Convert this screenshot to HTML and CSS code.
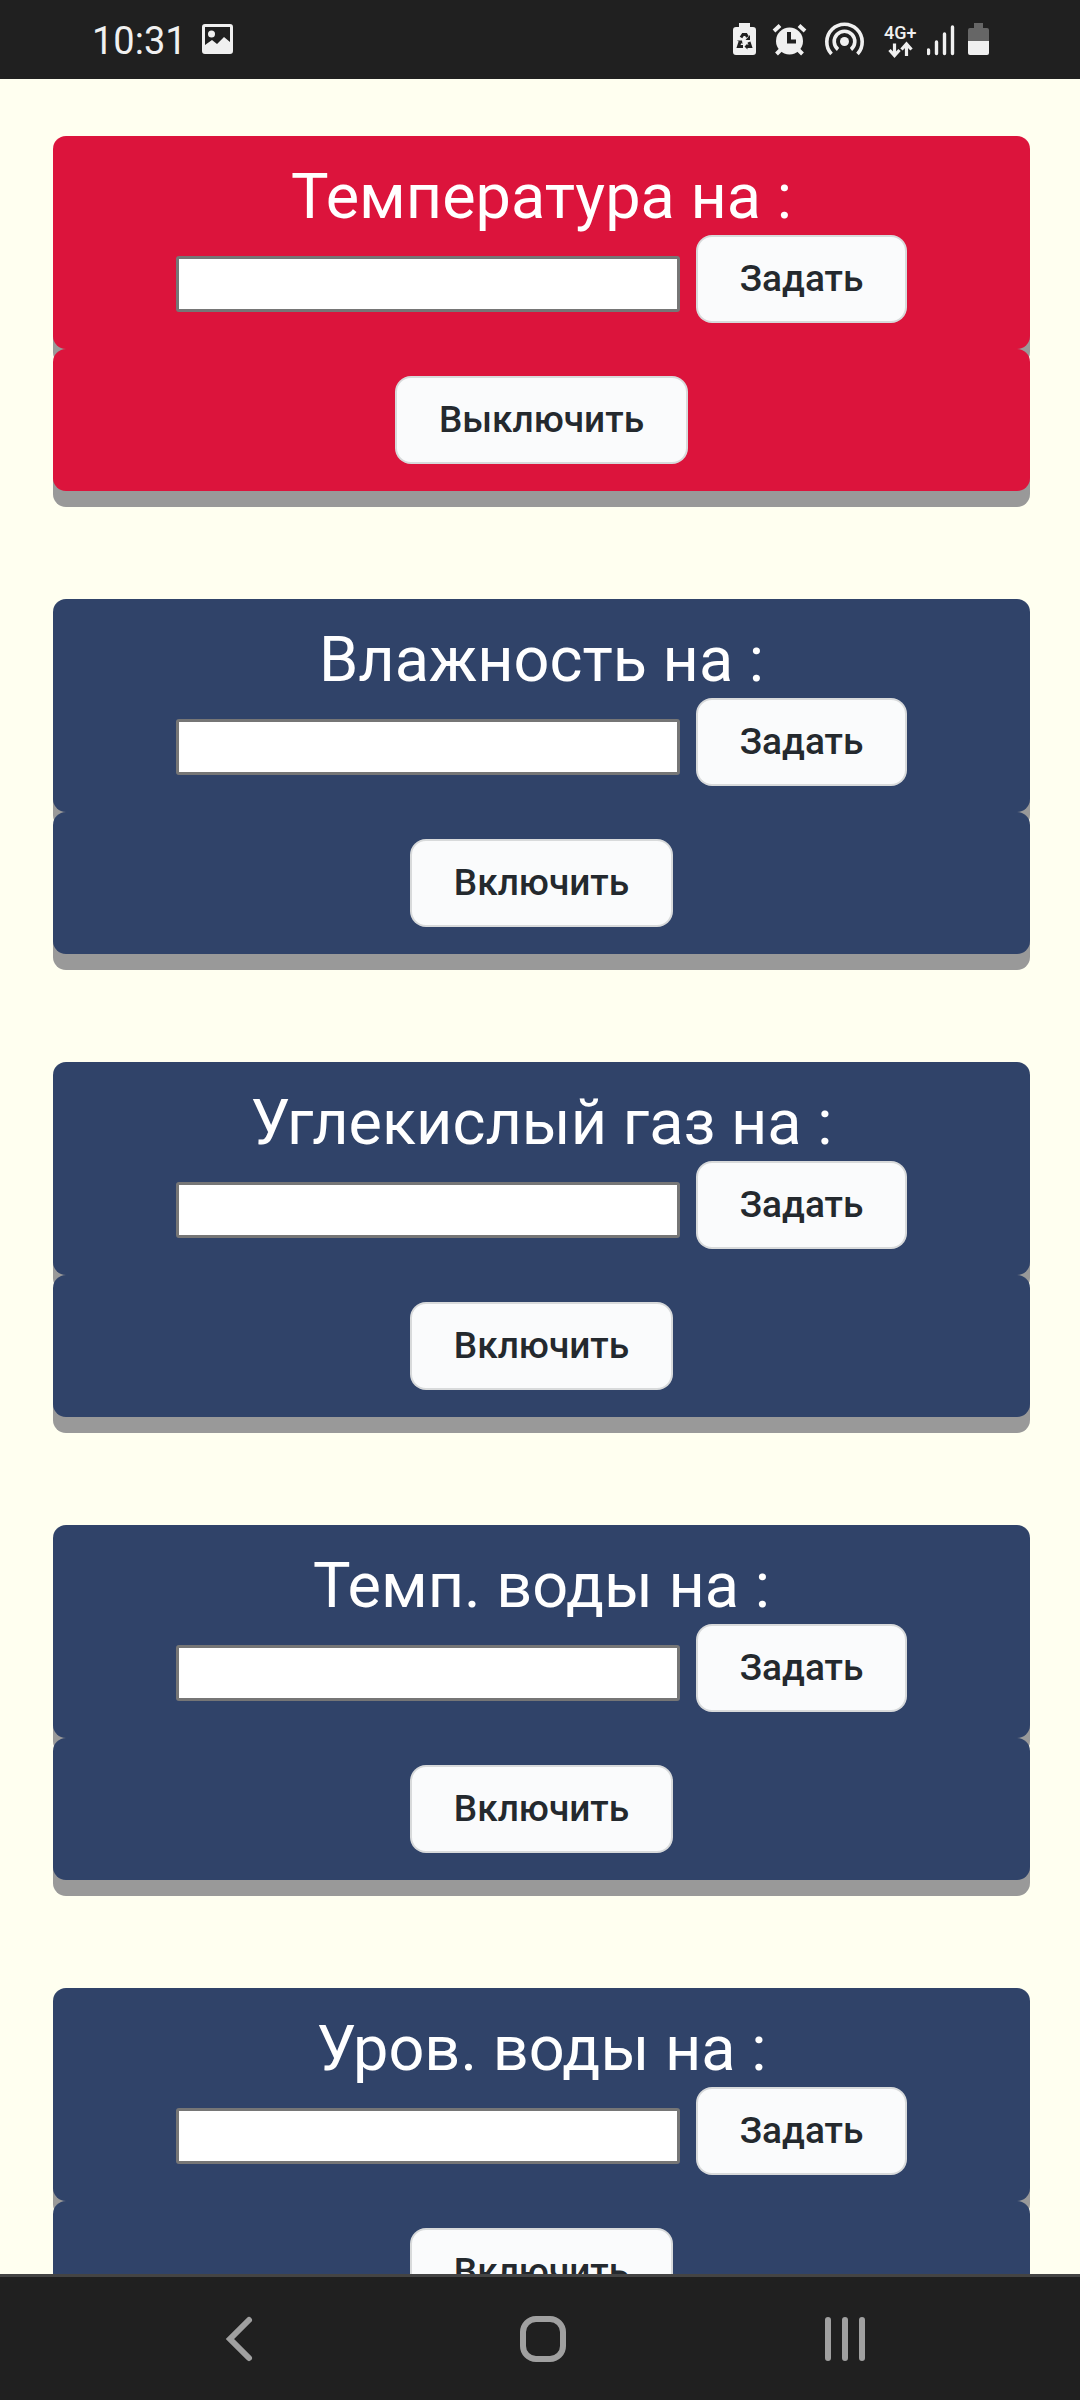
FILE: index.html
```
<!DOCTYPE html>
<html lang="ru">
<head>
<meta charset="utf-8">
<meta name="viewport" content="width=device-width, initial-scale=1">
<title>Управление климатом</title>
<link rel="stylesheet" href="styles.css">
</head>
<body>
<header class="status">
  <span class="clock">10:31</span>
  <svg class="glyph" width="32" height="40" viewBox="0 20 32 40" aria-hidden="true">
    <path fill="#f0f0f0" fill-rule="evenodd" d="M3 24H28Q31 24 31 27V51Q31 54 28 54H3Q0 54 0 51V27Q0 24 3 24ZM3 27V45L10 40L15 44L22 37L28 42V27Z"/>
    <circle cx="9.500" cy="34" r="3.500" fill="#f0f0f0"/>
  </svg>
  <div class="indicators">
    <svg class="glyph" width="26" height="40" viewBox="732 20 26 40" aria-hidden="true">
      <path fill="#f0f0f0" d="M739 23H750V27H753Q756 27 756 30V52Q756 55 753 55H736Q733 55 733 52V30Q733 27 736 27H739Z"/>
      <g fill="none" stroke="#202020" stroke-width="3">
        <path d="M741 37.500L743 34.500H746L747.500 37"/>
        <path d="M740 42L738.500 46.500H743"/>
        <path d="M747 46.500H750.500L749 42"/>
      </g>
      <path fill="#202020" d="M750 35V40H745.500ZM737 40.500H742L742.500 44ZM747.500 43.500V49.500L744.500 46.500Z"/>
    </svg>
    <svg class="glyph" width="44" height="40" viewBox="768 20 44 40" aria-hidden="true">
      <g stroke="#f0f0f0" stroke-width="4" fill="none">
        <path d="M774 31L780 25.500M799 25.500L805 31M776.500 54L782 48.500M797 48.500L802.500 54"/>
      </g>
      <circle cx="789.500" cy="41" r="13.500" fill="#f0f0f0"/>
      <path d="M789 32V41.500H796" stroke="#202020" stroke-width="4" fill="none"/>
    </svg>
    <svg class="glyph" width="46" height="40" viewBox="822 20 46 40" aria-hidden="true">
      <circle cx="844.500" cy="41.500" r="4.500" fill="#f0f0f0"/>
      <g stroke="#f0f0f0" stroke-width="3.600" fill="none">
        <path d="M838 49.500A10.300 10.300 0 1 1 851 49.500"/>
        <path d="M831.500 54A17.700 17.700 0 1 1 857.500 54"/>
      </g>
    </svg>
    <svg class="glyph network" width="39" height="40" viewBox="878 20 39 40" role="img" aria-label="4G+">
      <text x="884" y="39">4G+</text>
      <path d="M894.500 43.500V55M889.500 50L894.500 55.500L899.500 50M906.500 56V45M901.500 49.500L906.500 44L911.500 49.500" stroke="#f0f0f0" stroke-width="3.200" fill="none"/>
    </svg>
    <svg class="glyph" width="30" height="40" viewBox="927 20 30 40" aria-hidden="true">
      <path d="M928.500 50V53.500M936.500 42V53.500M944.500 34V53.500M952.500 27V53.500" stroke="#f0f0f0" stroke-width="3.400" stroke-linecap="round"/>
    </svg>
    <svg class="glyph" width="23" height="40" viewBox="967 20 23 40" aria-hidden="true">
      <path fill="#666" d="M974 23H983V28H987Q989 28 989 30V41H968V30Q968 28 970 28H974Z"/>
      <path fill="#f0f0f0" d="M968 41H989V53Q989 55 987 55H970Q968 55 968 53Z"/>
    </svg>
  </div>
</header>

<main class="content">
  <section class="card card-active">
    <form class="panel">
      <label class="title" for="temperature">Температура на :</label>
      <div class="row">
        <input class="field" id="temperature" type="text">
        <button class="btn" type="button">Задать</button>
      </div>
    </form>
    <div class="panel panel-toggle"><button class="btn" type="button">Выключить</button></div>
  </section>

  <section class="card">
    <form class="panel">
      <label class="title" for="humidity">Влажность на :</label>
      <div class="row">
        <input class="field" id="humidity" type="text">
        <button class="btn" type="button">Задать</button>
      </div>
    </form>
    <div class="panel panel-toggle"><button class="btn" type="button">Включить</button></div>
  </section>

  <section class="card">
    <form class="panel">
      <label class="title" for="co2">Углекислый газ на :</label>
      <div class="row">
        <input class="field" id="co2" type="text">
        <button class="btn" type="button">Задать</button>
      </div>
    </form>
    <div class="panel panel-toggle"><button class="btn" type="button">Включить</button></div>
  </section>

  <section class="card">
    <form class="panel">
      <label class="title" for="water-temperature">Темп. воды на :</label>
      <div class="row">
        <input class="field" id="water-temperature" type="text">
        <button class="btn" type="button">Задать</button>
      </div>
    </form>
    <div class="panel panel-toggle"><button class="btn" type="button">Включить</button></div>
  </section>

  <section class="card">
    <form class="panel">
      <label class="title" for="water-level">Уров. воды на :</label>
      <div class="row">
        <input class="field" id="water-level" type="text">
        <button class="btn" type="button">Задать</button>
      </div>
    </form>
    <div class="panel panel-toggle"><button class="btn" type="button">Включить</button></div>
  </section>
</main>

<nav class="navbar">
  <button class="nav-btn" type="button" aria-label="Назад">
    <svg width="48" height="48" viewBox="0 0 48 48"><path d="M33 5L14 24L33 43"/></svg>
  </button>
  <button class="nav-btn" type="button" aria-label="Домой">
    <svg width="48" height="48" viewBox="0 0 48 48"><rect x="4" y="4" width="40" height="40" rx="13"/></svg>
  </button>
  <button class="nav-btn" type="button" aria-label="Недавние">
    <svg width="48" height="48" viewBox="0 0 48 48"><path d="M7 5V43M24 5V43M41 5V43"/></svg>
  </button>
</nav>
</body>
</html>
```
FILE: styles.css
```
* {
  box-sizing: border-box;
}

body {
  margin: 0;
  height: 100vh;
  display: flex;
  flex-direction: column;
  background: #fffff0;
  font-family: Roboto, "Liberation Sans", sans-serif;
}

/* Status bar */
.status {
  flex: none;
  display: flex;
  align-items: center;
  height: 79px;
  padding: 0 90px 0 92px;
  background: #202020;
  color: #f0f0f0;
}

.clock {
  width: 110px;
  padding-top: 2px;
  font-size: 38px;
  line-height: 48px;
}

.indicators {
  display: flex;
  gap: 10px;
  margin-left: auto;
}

.glyph {
  display: block;
}

.network text {
  fill: #f0f0f0;
  font-size: 18px;
  font-weight: 500;
}

/* Cards */
.content {
  flex: 1;
  min-height: 0;
  overflow-y: auto;
  scrollbar-width: none;
  display: flex;
  flex-direction: column;
  gap: 108px;
  padding: 57px 50px 108px 53px;
}

.card {
  flex: none;
  color: #fff;
}

.panel {
  padding: 23px 24px 26px;
  border-radius: 13px;
  background: #304369;
  box-shadow: 0 16px 0 #999;
  text-align: center;
}

.card-active .panel {
  background: #dc143c;
}

.panel-toggle {
  position: relative;
  padding: 27px 24px;
}

.title {
  display: block;
  font-size: 63px;
  line-height: 76px;
}

.row {
  display: flex;
  justify-content: center;
  align-items: flex-end;
  gap: 16px;
}

.field {
  width: 504px;
  min-width: 0;
  height: 56px;
  margin-bottom: 11px;
  padding: 3px 6px;
  border: 3px solid #767676;
  border-radius: 3px;
  background: #fff;
  font: 35px "Liberation Sans", sans-serif;
}

.btn {
  height: 88px;
  padding: 0 42px;
  border: 2px solid rgba(27, 31, 35, 0.15);
  border-radius: 16px;
  background: #fafbfc;
  color: #24292e;
  font-family: inherit;
  font-size: 37px;
  font-weight: 500;
  line-height: 52px;
}

/* System navigation */
.navbar {
  flex: none;
  display: flex;
  align-items: center;
  justify-content: space-between;
  height: 126px;
  padding: 0 175px 0 180px;
  border-top: 3px solid #444;
  background: #202020;
}

.nav-btn {
  display: flex;
  align-items: center;
  justify-content: center;
  width: 120px;
  height: 96px;
  padding: 0;
  border: 0;
  background: none;
}

.nav-btn svg {
  fill: none;
  stroke: #a0a0a0;
  stroke-width: 6px;
  stroke-linecap: round;
}
```
